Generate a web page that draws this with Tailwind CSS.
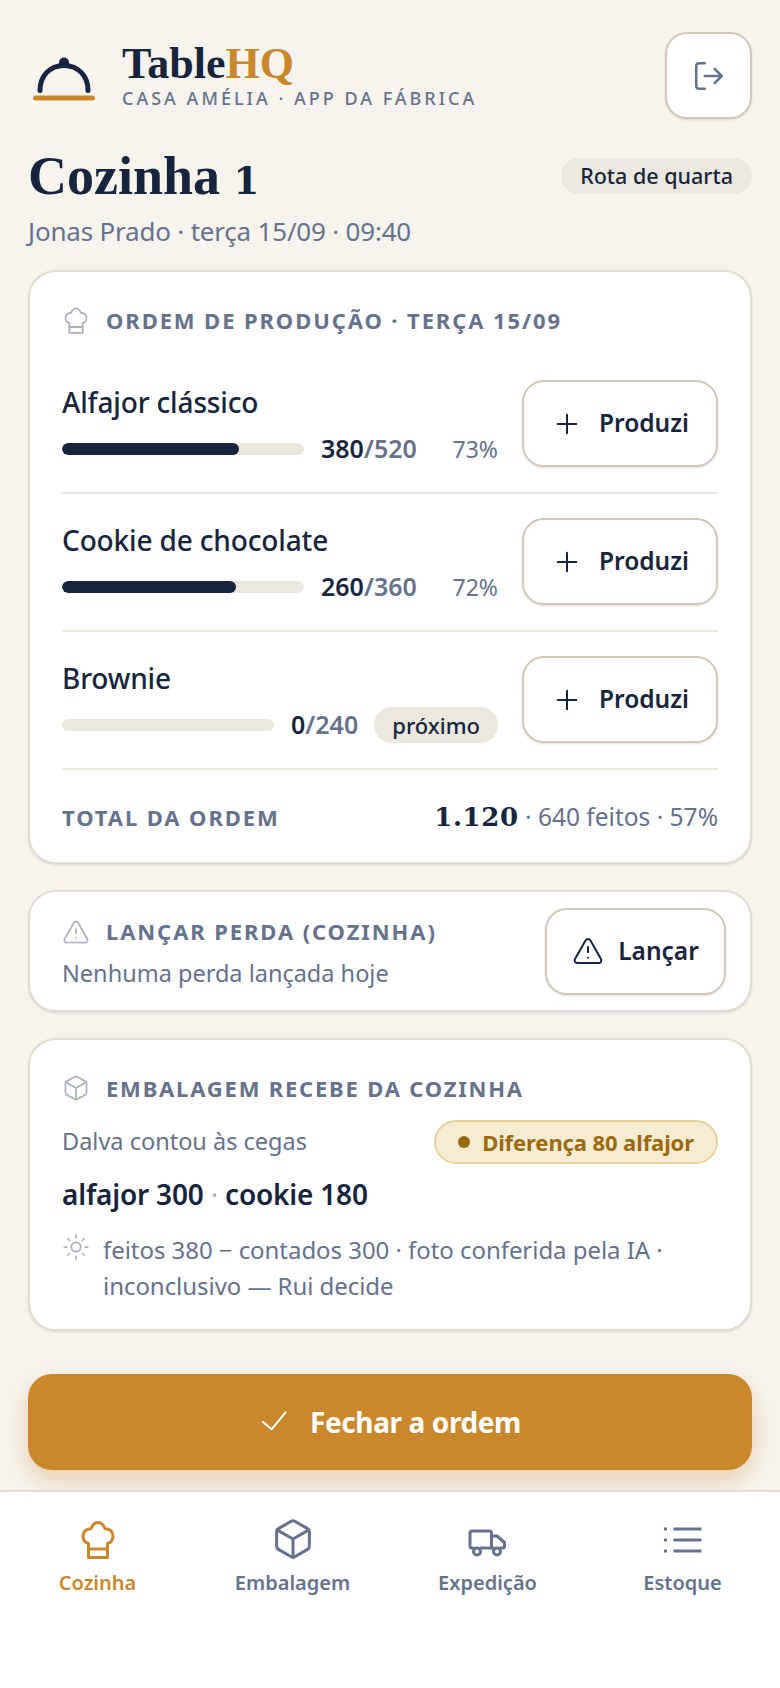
<!DOCTYPE html>
<html lang="pt">
<head>
<meta charset="utf-8">
<script src="https://cdn.jsdelivr.net/npm/@tailwindcss/browser@4"></script>
</head>
<body class="bg-[#f7f4ee] font-['Noto_Sans','Open_Sans',sans-serif] text-[#16253d]">
<div class="w-[780px] h-[1688px] flex flex-col overflow-hidden">
  <main class="flex-1 px-[28px] pt-[32px] min-h-0">
    <header class="flex items-center justify-between h-[87px]">
      <div class="flex items-center gap-[24px]">
        <svg class="ml-[2px] w-[68px] h-[68px]" viewBox="0 0 68 68" fill="none" stroke-linecap="round"><circle cx="34" cy="20.5" r="5" fill="#16253d"/><path d="M10 48.5C10 33.5 20 23.5 34 23.5S58 33.5 58 48.5" stroke="#16253d" stroke-width="5"/><path d="M5.5 56H62.5" stroke="#c8882b" stroke-width="5"/></svg>
        <div>
          <div class="font-['Liberation_Serif',serif] font-bold text-[44px] leading-[42px]">Table<span class="text-[#c8882b]">HQ</span></div>
          <div class="mt-[2px] text-[18px] leading-[22px] font-medium tracking-[3px] text-[#66728c]">CASA AMÉLIA · APP DA FÁBRICA</div>
        </div>
      </div>
      <button class="w-[87px] h-[87px] rounded-[22px] bg-white border-2 border-[#d2c8ba] shadow-sm flex items-center justify-center">
        <svg class="w-[34px] h-[34px]" viewBox="0 0 24 24" fill="none" stroke="#66728c" stroke-width="1.75" stroke-linecap="round" stroke-linejoin="round"><path d="M9 21H5a2 2 0 0 1-2-2V5a2 2 0 0 1 2-2h4"/><path d="m16 17 5-5-5-5"/><path d="M21 12H9"/></svg>
      </button>
    </header>
    <section class="mt-[28px] flex items-center justify-between h-[58px]">
      <h1 class="font-['Liberation_Serif',serif] font-bold text-[54px] leading-[58px]">Cozinha <span class="font-['DejaVu_Serif',serif] text-[37px] leading-[34px]">1</span></h1>
      <span class="h-[36px] px-[19px] rounded-full bg-[#ece8de] flex items-center text-[21.5px] font-medium">Rota de quarta</span>
    </section>
    <p class="mt-[8px] text-[26px] leading-[36px] tracking-[-0.2px] text-[#66728c]">Jonas Prado · terça 15/09 · 09:40</p>

    <section class="mt-[21px] bg-white rounded-[28px] border-2 border-[#e3ddd1] shadow-sm px-[32px] pt-[34px] pb-[27px]">
      <div class="flex items-center gap-[16px] h-[28px]">
        <svg class="w-[28px] h-[28px]" viewBox="0 0 40 40" fill="none" stroke="#a9b2c4" stroke-width="2.6" stroke-linecap="round" stroke-linejoin="round"><path d="M10.5 24.5C7 23.5 5 20.5 5 17C5 12.5 8.5 9.5 13 9.7C14.5 6 17 3.5 20 3.5C23 3.5 25.5 6 27 9.7C31.5 9.5 35 12.5 35 17C35 20.5 33 23.5 29.5 24.5V38.5H10.5Z"/><path d="M10.5 30H29.5"/></svg>
        <span class="text-[22px] font-bold tracking-[1.9px] text-[#66728c]">ORDEM DE PRODUÇÃO · TERÇA 15/09</span>
      </div>
      <div class="mt-[46px] flex items-center justify-between pb-[25px] border-b-2 border-[#ece8de]">
        <div class="w-[436px]">
          <div class="text-[28px] leading-[44px] font-medium tracking-[-0.15px]">Alfajor clássico</div>
          <div class="mt-[7px] flex items-center h-[36px]">
            <div class="w-[242px] h-[12px] rounded-full bg-[#ece8de] overflow-hidden"><div class="h-full rounded-full bg-[#16253d] w-[177px]"></div></div>
            <span class="ml-[17px] text-[25px] font-semibold">380<span class="text-[#66728c]">/520</span></span>
            <span class="ml-auto text-[23px] text-[#66728c]">73%</span>
          </div>
        </div>
        <button class="w-[196px] h-[87px] rounded-[22px] bg-white border-2 border-[#d2c8ba] shadow-sm flex items-center justify-center gap-[16px] text-[24.5px] font-semibold">
          <svg class="w-[32px] h-[32px]" viewBox="0 0 24 24" fill="none" stroke="#16253d" stroke-width="1.5" stroke-linecap="round" stroke-linejoin="round"><path d="M5 12h14"/><path d="M12 5v14"/></svg>Produzi
        </button>
      </div>
      <div class="mt-[24px] flex items-center justify-between pb-[25px] border-b-2 border-[#ece8de]">
        <div class="w-[436px]">
          <div class="text-[28px] leading-[44px] font-medium tracking-[-0.15px]">Cookie de chocolate</div>
          <div class="mt-[7px] flex items-center h-[36px]">
            <div class="w-[242px] h-[12px] rounded-full bg-[#ece8de] overflow-hidden"><div class="h-full rounded-full bg-[#16253d] w-[174px]"></div></div>
            <span class="ml-[17px] text-[25px] font-semibold">260<span class="text-[#66728c]">/360</span></span>
            <span class="ml-auto text-[23px] text-[#66728c]">72%</span>
          </div>
        </div>
        <button class="w-[196px] h-[87px] rounded-[22px] bg-white border-2 border-[#d2c8ba] shadow-sm flex items-center justify-center gap-[16px] text-[24.5px] font-semibold">
          <svg class="w-[32px] h-[32px]" viewBox="0 0 24 24" fill="none" stroke="#16253d" stroke-width="1.5" stroke-linecap="round" stroke-linejoin="round"><path d="M5 12h14"/><path d="M12 5v14"/></svg>Produzi
        </button>
      </div>
      <div class="mt-[24px] flex items-center justify-between pb-[25px] border-b-2 border-[#ece8de]">
        <div class="w-[436px]">
          <div class="text-[28px] leading-[44px] font-medium tracking-[-0.15px]">Brownie</div>
          <div class="mt-[7px] flex items-center h-[36px]">
            <div class="w-[212px] h-[12px] rounded-full bg-[#ece8de]"></div>
            <span class="ml-[17px] text-[25px] font-semibold">0<span class="text-[#66728c]">/240</span></span>
            <span class="ml-auto h-[36px] px-[18px] rounded-full bg-[#ece8de] flex items-center text-[22px] font-medium">próximo</span>
          </div>
        </div>
        <button class="w-[196px] h-[87px] rounded-[22px] bg-white border-2 border-[#d2c8ba] shadow-sm flex items-center justify-center gap-[16px] text-[24.5px] font-semibold">
          <svg class="w-[32px] h-[32px]" viewBox="0 0 24 24" fill="none" stroke="#16253d" stroke-width="1.5" stroke-linecap="round" stroke-linejoin="round"><path d="M5 12h14"/><path d="M12 5v14"/></svg>Produzi
        </button>
      </div>
      <div class="mt-[29px] flex items-center justify-between h-[36px]">
        <span class="text-[22px] font-bold tracking-[1.9px] text-[#66728c]">TOTAL DA ORDEM</span>
        <span class="text-[24.5px] leading-[36px] text-[#66728c]"><span class="font-['DejaVu_Serif',serif] font-bold text-[26px] leading-[25px] tracking-[0.6px] text-[#16253d]">1.120</span> · 640 feitos · 57%</span>
      </div>
    </section>

    <section class="mt-[26px] bg-white rounded-[28px] border-2 border-[#e3ddd1] shadow-sm pl-[32px] pr-[24px] h-[122px] flex items-center justify-between">
      <div class="pt-[5px]">
        <div class="flex items-center gap-[16px] h-[28px]">
          <svg class="w-[28px] h-[28px]" viewBox="0 0 24 24" fill="none" stroke="#a9b2c4" stroke-width="1.5" stroke-linecap="round" stroke-linejoin="round"><path d="m21.73 18-8-14a2 2 0 0 0-3.48 0l-8 14A2 2 0 0 0 4 21h16a2 2 0 0 0 1.73-3"/><path d="M12 9v4"/><path d="M12 17h.01"/></svg>
          <span class="text-[22px] font-bold tracking-[1.9px] text-[#66728c]">LANÇAR PERDA (COZINHA)</span>
        </div>
        <p class="mt-[10px] text-[23.5px] leading-[34px] text-[#66728c]">Nenhuma perda lançada hoje</p>
      </div>
      <button class="w-[181px] h-[87px] rounded-[22px] bg-white border-2 border-[#d2c8ba] shadow-sm flex items-center justify-center gap-[14px] text-[24.5px] font-semibold">
        <svg class="w-[32px] h-[32px]" viewBox="0 0 24 24" fill="none" stroke="#16253d" stroke-width="1.5" stroke-linecap="round" stroke-linejoin="round"><path d="m21.73 18-8-14a2 2 0 0 0-3.48 0l-8 14A2 2 0 0 0 4 21h16a2 2 0 0 0 1.73-3"/><path d="M12 9v4"/><path d="M12 17h.01"/></svg>Lançar
      </button>
    </section>

    <section class="mt-[26px] bg-white rounded-[28px] border-2 border-[#e3ddd1] shadow-sm px-[32px] pt-[34px] h-[293px]">
      <div class="flex items-center gap-[16px] h-[28px]">
        <svg class="w-[28px] h-[28px]" viewBox="0 0 24 24" fill="none" stroke="#a9b2c4" stroke-width="1.5" stroke-linecap="round" stroke-linejoin="round"><path d="M21 8a2 2 0 0 0-1-1.73l-7-4a2 2 0 0 0-2 0l-7 4A2 2 0 0 0 3 8v8a2 2 0 0 0 1 1.73l7 4a2 2 0 0 0 2 0l7-4A2 2 0 0 0 21 16Z"/><path d="M12 22V12"/><path d="m3.3 7 8.7 5 8.7-5"/></svg>
        <span class="text-[22px] font-bold tracking-[1.8px] text-[#66728c]">EMBALAGEM RECEBE DA COZINHA</span>
      </div>
      <div class="mt-[18px] flex items-center justify-between h-[44px]">
        <span class="text-[23.5px] text-[#66728c]">Dalva contou às cegas</span>
        <span class="h-[44px] px-[22px] rounded-full bg-[#f6ecd2] border-2 border-[#e6d39a] flex items-center gap-[12px] text-[22px] tracking-[-0.1px] font-bold text-[#9a6a10]"><span class="w-[12px] h-[12px] rounded-full bg-[#9a6a10]"></span>Diferença 80 alfajor</span>
      </div>
      <div class="mt-[10px] text-[28px] leading-[40px] font-semibold tracking-[-0.2px]">alfajor 300 <span class="text-[#a9b2c4] font-normal">·</span> cookie 180</div>
      <div class="mt-[18px] flex gap-[13px]">
        <svg class="mt-[1px] w-[28px] h-[28px] shrink-0" viewBox="0 0 24 24" fill="none" stroke="#a9b2c4" stroke-width="1.5" stroke-linecap="round" stroke-linejoin="round"><circle cx="12" cy="12" r="4"/><path d="M12 2v2"/><path d="M12 20v2"/><path d="m4.93 4.93 1.41 1.41"/><path d="m17.66 17.66 1.41 1.41"/><path d="M2 12h2"/><path d="M20 12h2"/><path d="m6.34 17.66-1.41 1.41"/><path d="m19.07 4.93-1.41 1.41"/></svg>
        <p class="text-[24px] leading-[36px] tracking-[-0.05px] text-[#66728c]">feitos 380 − contados 300 · foto conferida pela IA · inconclusivo — Rui decide</p>
      </div>
    </section>

    <button class="mt-[43px] w-full h-[96px] rounded-[24px] bg-[#c8882b] shadow-[0_10px_24px_rgba(200,136,43,0.35)] flex items-center justify-center gap-[21px] text-white text-[28px] font-bold tracking-[-0.4px]">
      <svg class="w-[30px] h-[30px]" viewBox="0 0 30 30" fill="none" stroke="#fff" stroke-width="2" stroke-linecap="round" stroke-linejoin="round"><path d="M3.7 14.7 12.6 22.3 26.5 5.3"/></svg>Fechar a ordem
    </button>
  </main>
  <nav class="h-[198px] bg-white border-t-2 border-[#e3ddd1] grid grid-cols-4 pt-[27px] relative">
    <div class="flex flex-col items-center gap-[10px] text-[#c8882b]">
      <svg class="w-[40px] h-[40px]" viewBox="0 0 40 40" fill="none" stroke="currentColor" stroke-width="3" stroke-linecap="round" stroke-linejoin="round"><path d="M10.5 24.5C7 23.5 5 20.5 5 17C5 12.5 8.5 9.5 13 9.7C14.5 6 17 3.5 20 3.5C23 3.5 25.5 6 27 9.7C31.5 9.5 35 12.5 35 17C35 20.5 33 23.5 29.5 24.5V38.5H10.5Z"/><path d="M10.5 30H29.5"/></svg>
      <span class="text-[20px] leading-[28px] font-semibold">Cozinha</span>
    </div>
    <div class="flex flex-col items-center gap-[10px] text-[#66728c]">
      <svg class="w-[40px] h-[40px]" viewBox="1 1 22 22" fill="none" stroke="currentColor" stroke-width="1.65" stroke-linecap="round" stroke-linejoin="round"><path d="M21 8a2 2 0 0 0-1-1.73l-7-4a2 2 0 0 0-2 0l-7 4A2 2 0 0 0 3 8v8a2 2 0 0 0 1 1.73l7 4a2 2 0 0 0 2 0l7-4A2 2 0 0 0 21 16Z"/><path d="M12 22V12"/><path d="m3.3 7 8.7 5 8.7-5"/></svg>
      <span class="text-[20px] leading-[28px] font-semibold">Embalagem</span>
    </div>
    <div class="flex flex-col items-center gap-[10px] text-[#66728c]">
      <svg class="w-[40px] h-[40px]" viewBox="0 0 40 40" fill="none" stroke="currentColor" stroke-width="3" stroke-linecap="round" stroke-linejoin="round"><path d="M5.5 29H4a2 2 0 0 1-2-2V14a2 2 0 0 1 2-2H21.5a2 2 0 0 1 2 2V29"/><path d="M12.5 29H25.5"/><path d="M23.5 17H29L36.5 23.5V27a2 2 0 0 1-2 2H32.5"/><circle cx="9" cy="32.5" r="3.5"/><circle cx="29" cy="32.5" r="3.5"/></svg>
      <span class="text-[20px] leading-[28px] font-semibold">Expedição</span>
    </div>
    <div class="flex flex-col items-center gap-[10px] text-[#66728c]">
      <svg class="w-[40px] h-[40px]" viewBox="0 0 40 40" fill="none" stroke="currentColor" stroke-width="3" stroke-linecap="square" stroke-linejoin="round"><path d="M2.5 10h.01"/><path d="M2.5 21h.01"/><path d="M2.5 32h.01"/><path d="M12 10H37"/><path d="M12 21H37"/><path d="M12 32H37"/></svg>
      <span class="text-[20px] leading-[28px] font-semibold">Estoque</span>
    </div>
  </nav>
</div>
</body>
</html>
